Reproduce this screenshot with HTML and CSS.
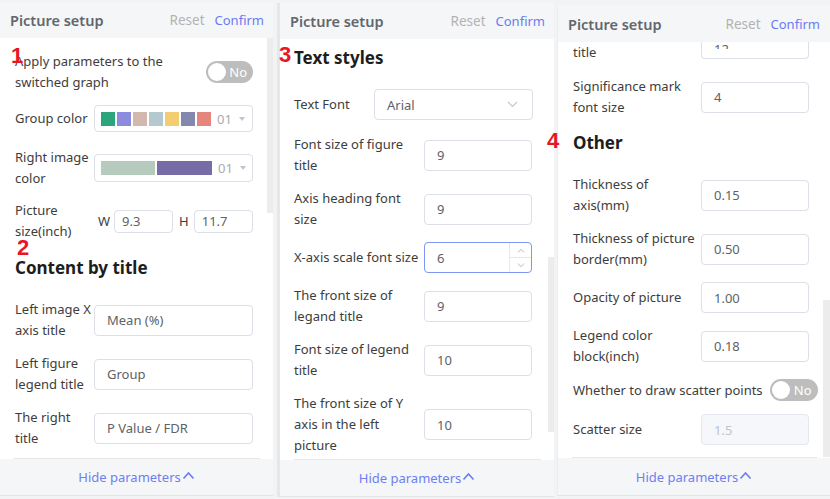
FILE: index.html
```html
<!DOCTYPE html>
<html>
<head>
<meta charset="utf-8">
<link rel="stylesheet" href="styles.css">
</head>
<body>
<div class="screen">
  <section class="panel p1">
    <header class="ph"><span class="ttl">Picture setup</span><span class="acts"><span class="reset">Reset</span><span class="confirm">Confirm</span></span></header>
    <div class="pbody">
      <div class="scroll">
        <div class="content c1">
          <div class="row r2">
            <div class="lab grow">Apply parameters to the switched graph</div>
            <div class="toggle"><span class="knob"></span><span class="tt">No</span></div>
          </div>
          <div class="row g12">
            <div class="lab w79">Group color</div>
            <div class="select sw">
              <div class="swatches">
                <i style="background:#2aa57c"></i><i style="background:#8b8be0"></i><i style="background:#d3b9ad"></i><i style="background:#b4c9cf"></i><i style="background:#f2cd71"></i><i style="background:#8488ae"></i><i style="background:#e5857b"></i>
              </div>
              <span class="num">01</span><span class="tri"></span>
            </div>
          </div>
          <div class="row r2 g15">
            <div class="lab w79">Right image color</div>
            <div class="select sw tall">
              <div class="bars"><i style="background:#b6cabd"></i><i style="background:#776ca5"></i></div>
              <span class="num">01</span><span class="tri"></span>
            </div>
          </div>
          <div class="row r2 g11">
            <div class="lab w79">Picture size(inch)</div>
            <div class="wh">
              <span class="whl">W</span><div class="inp small">9.3</div>
              <span class="whl hl">H</span><div class="inp small">11.7</div>
            </div>
          </div>
          <h2 class="head h-c">Content by title</h2>
          <div class="row r2">
            <div class="lab w79">Left image X axis title</div>
            <div class="inp wide">Mean (%)</div>
          </div>
          <div class="row r2 g12">
            <div class="lab w79">Left figure legend title</div>
            <div class="inp wide">Group</div>
          </div>
          <div class="row r2 g12">
            <div class="lab w79">The right title</div>
            <div class="inp wide">P Value / FDR</div>
          </div>
        </div>
      </div>
      <div class="sbar"><div class="thumb t1"></div></div>
    </div>
    <div class="sep"></div>
    <footer class="pf">Hide parameters<svg width="13" height="9" viewBox="0 0 13 9"><path d="M1.5 7.5 L6.5 2 L11.5 7.5" fill="none" stroke="#6d7ff0" stroke-width="1.7"/></svg></footer>
  </section>

  <section class="panel p2">
    <header class="ph"><span class="ttl">Picture setup</span><span class="acts"><span class="reset">Reset</span><span class="confirm">Confirm</span></span></header>
    <div class="pbody">
      <div class="scroll">
        <div class="content c2">
          <h2 class="head h-t">Text styles</h2>
          <div class="row">
            <div class="lab w80">Text Font</div>
            <div class="select font">Arial<svg class="chev" width="11" height="7" viewBox="0 0 11 7"><path d="M1 1 L5.5 5.5 L10 1" fill="none" stroke="#c3c6cc" stroke-width="1.1"/></svg></div>
          </div>
          <div class="row r2 g14">
            <div class="lab w130">Font size of figure title</div>
            <div class="inp narrow">9</div>
          </div>
          <div class="row r2 g12">
            <div class="lab w130">Axis heading font size</div>
            <div class="inp narrow">9</div>
          </div>
          <div class="row g12">
            <div class="lab w130 nowrap">X-axis scale font size</div>
            <div class="inp narrow focus">6<div class="spin"><span class="su"><svg width="8" height="5" viewBox="0 0 8 5"><path d="M1 4.5 L4 1.2 L7 4.5" fill="none" stroke="#b8bcc4" stroke-width="1"/></svg></span><span class="sd"><svg width="8" height="5" viewBox="0 0 8 5"><path d="M1 0.5 L4 3.8 L7 0.5" fill="none" stroke="#b8bcc4" stroke-width="1"/></svg></span></div></div>
          </div>
          <div class="row r2 g12">
            <div class="lab w130">The front size of legand title</div>
            <div class="inp narrow">9</div>
          </div>
          <div class="row r2 g12">
            <div class="lab w130">Font size of legend title</div>
            <div class="inp narrow">10</div>
          </div>
          <div class="row g12">
            <div class="lab w130">The front size of Y axis in the left picture</div>
            <div class="inp narrow">10</div>
          </div>
        </div>
      </div>
      <div class="sbar"><div class="thumb t2"></div></div>
    </div>
    <div class="sep"></div>
    <footer class="pf">Hide parameters<svg width="13" height="9" viewBox="0 0 13 9"><path d="M1.5 7.5 L6.5 2 L11.5 7.5" fill="none" stroke="#6d7ff0" stroke-width="1.7"/></svg></footer>
  </section>

  <section class="panel p3">
    <header class="ph"><span class="ttl">Picture setup</span><span class="acts"><span class="reset">Reset</span><span class="confirm">Confirm</span></span></header>
    <div class="pbody">
      <div class="scroll">
        <div class="content c3">
          <div class="row first">
            <div class="lab w128 lastline">title</div>
            <div class="inp narrow cut"><span class="cutv">12</span></div>
          </div>
          <div class="row r2 g13">
            <div class="lab w128">Significance mark font size</div>
            <div class="inp narrow">4</div>
          </div>
          <h2 class="head h-o">Other</h2>
          <div class="row r2">
            <div class="lab w128">Thickness of axis(mm)</div>
            <div class="inp narrow">0.15</div>
          </div>
          <div class="row r2 g12">
            <div class="lab w128">Thickness of picture border(mm)</div>
            <div class="inp narrow">0.50</div>
          </div>
          <div class="row g12">
            <div class="lab w128">Opacity of picture</div>
            <div class="inp narrow">1.00</div>
          </div>
          <div class="row r2 g12">
            <div class="lab w128">Legend color block(inch)</div>
            <div class="inp narrow">0.18</div>
          </div>
          <div class="row g12">
            <div class="lab nowrap">Whether to draw scatter points</div>
            <div class="toggle t-s"><span class="knob"></span><span class="tt">No</span></div>
          </div>
          <div class="row g13">
            <div class="lab w128">Scatter size</div>
            <div class="inp narrow dis">1.5</div>
          </div>
        </div>
      </div>
      <div class="sbar"><div class="thumb t3"></div></div>
    </div>
    <div class="sep"></div>
    <footer class="pf">Hide parameters<svg width="13" height="9" viewBox="0 0 13 9"><path d="M1.5 7.5 L6.5 2 L11.5 7.5" fill="none" stroke="#6d7ff0" stroke-width="1.7"/></svg></footer>
  </section>

  <span class="mark m1">1</span>
  <span class="mark m2">2</span>
  <span class="mark m3">3</span>
  <span class="mark m4">4</span>
</div>
</body>
</html>
```

FILE: styles.css
```css
* { box-sizing: border-box; }
html, body { margin: 0; padding: 0; }
body {
  width: 830px;
  height: 499px;
  overflow: hidden;
  background: #f2f3f5;
  font-family: "Noto Sans", "Open Sans", sans-serif;
  font-size: 13px;
  color: #3a3a3a;
}
.screen {
  position: relative;
  display: flex;
  align-items: flex-start;
  width: 830px;
  height: 499px;
}
.panel {
  display: flex;
  flex-direction: column;
  background: #fff;
  border-bottom: 1px solid #e3e4e6;
}
.p1 { width: 273px; margin-top: 2px; }
.p2 { width: 277px; margin-left: 4px; margin-top: 3px; border-left: 3px solid #e6e7e9; }
.p3 { width: 273px; margin-left: 3px; margin-top: 5px; border-left: 1px solid #eceef0; }

.ph {
  height: 36px;
  flex: none;
  display: flex;
  align-items: center;
  justify-content: space-between;
  padding: 0 9px 0 10px;
  background: #f5f6f8;
  position: relative;
  z-index: 1;
}
.p3 .ph { height: 37px; padding-left: 10px; padding-right: 10px; }
.ttl {
  font-size: 14.5px;
  font-weight: 600;
  color: #62666d;
}
.acts { display: flex; gap: 10px; font-size: 13px; }
.reset { color: #b2b2b2; font-size: 13.5px; }
.confirm { color: #6b7cf0; }

.pbody {
  display: flex;
  height: 420px;
  flex: none;
}
.p3 .pbody { height: 415px; }
.scroll { flex: 1; overflow: hidden; }
.content { display: flex; flex-direction: column; }
.c1 { padding: 13px 14px 0 15px; }
.c2 { padding: 7px 16px 0 14px; }
.c3 { padding: 0 15px 0 15px; }

.sbar { width: 6px; flex: none; display: flex; flex-direction: column; }
.p3 .sbar { width: 7px; }
.thumb { background: #ececec; }
.t1 { height: 175px; }
.t2 { height: 175px; margin-top: 218px; }
.t3 { height: 158px; margin-top: 258px; }

.sep { height: 1px; flex: none; background: #e6e7e9; margin: 0 13px 0 14px; }
.pf {
  height: 36px;
  flex: none;
  display: flex;
  align-items: center;
  justify-content: center;
  background: #f5f6f8;
  color: #6d7ff0;
  font-size: 13px;
}
.p3 .pf { height: 37px; }
.pf svg { margin-left: 1px; margin-top: -3px; }

.row { display: flex; align-items: center; }
.r2 { min-height: 42px; }
.g11 { margin-top: 11px; }
.g12 { margin-top: 12px; }
.g13 { margin-top: 13px; }
.g14 { margin-top: 14px; }
.g15 { margin-top: 15px; }

.first { height: 21px; align-items: flex-start; }
.lastline { line-height: 21px; }
.inp.cut { height: 17px; align-items: flex-end; overflow: hidden; border-top: none; border-radius: 0 0 4px 4px; }
.cutv { line-height: 12px; height: 6px; overflow: hidden; display: block; margin-bottom: 8px; transform: translateY(-1px); }

.lab { line-height: 21px; color: #3d3d3d; flex: none; }
.grow { flex: 1; padding-right: 20px; }
.w79 { width: 79px; }
.w80 { width: 80px; }
.w130 { width: 130px; }
.w128 { width: 128px; }
.nowrap { white-space: nowrap; }

.head {
  margin: 0;
  font-size: 17px;
  font-weight: 700;
  line-height: 24px;
  color: #1d1d1d;
}
.h-c { margin-top: 14px; margin-bottom: 19px; }
.h-t { margin-bottom: 19px; }
.h-o { margin-top: 13px; margin-bottom: 19px; }

.inp {
  height: 31px;
  flex: none;
  border: 1px solid #dcdfe6;
  border-radius: 4px;
  padding-left: 12px;
  display: flex;
  align-items: center;
  color: #606266;
  position: relative;
  background: #fff;
}
.wide { width: 159px; }
.narrow { width: 108px; }
.inp.small { width: 59px; height: 23px; padding-left: 7px; }
.inp.focus { border-color: #7d97f2; }
.inp.dis { background: #f5f7fa; border-color: #e4e7ed; color: #c0c4cc; }

.spin {
  position: absolute;
  right: 0;
  top: 0;
  bottom: 0;
  width: 22px;
  border-left: 1px solid #e4e7ed;
  display: flex;
  flex-direction: column;
}
.spin span { flex: 1; display: flex; align-items: center; justify-content: center; }
.spin .sd { border-top: 1px solid #e4e7ed; }

.wh { display: flex; align-items: center; }
.whl { margin-left: 4px; margin-right: 4px; color: #3d3d3d; }
.whl.hl { margin-left: 6px; margin-right: 5px; }

.select {
  border: 1px solid #dcdfe6;
  border-radius: 4px;
  display: flex;
  align-items: center;
  background: #fff;
  flex: none;
}
.sw { width: 159px; height: 27px; padding-left: 6px; }
.sw.tall { height: 28px; }
.swatches { display: flex; gap: 2px; }
.swatches i { display: block; width: 14px; height: 14px; }
.bars { display: flex; gap: 2px; }
.bars i { display: block; width: 54px; height: 14px; }
.bars i + i { width: 55px; }
.num { color: #a8abb2; margin-left: 6px; }
.tri {
  margin-left: 7px;
  width: 0;
  height: 0;
  border-left: 3px solid transparent;
  border-right: 3px solid transparent;
  border-top: 4px solid #c0c4cc;
}
.font {
  width: 159px;
  height: 31px;
  padding-left: 12px;
  color: #606266;
  justify-content: space-between;
  padding-right: 14px;
}

.toggle {
  width: 47px;
  height: 22px;
  border-radius: 11px;
  background: #bdbdbd;
  display: flex;
  align-items: center;
  padding: 0 6px 0 2px;
  justify-content: space-between;
  flex: none;
}
.t-s { width: 48px; margin-left: 7px; }
.knob { width: 18px; height: 18px; border-radius: 50%; background: #fff; }
.tt { color: #fff; font-size: 13px; }

.mark {
  position: absolute;
  font-family: "Liberation Sans", Arial, sans-serif;
  font-weight: 700;
  font-size: 22px;
  line-height: 22px;
  color: #e8161f;
  z-index: 2;
}
.m1 { left: 11px; top: 45px; }
.m2 { left: 17px; top: 237px; }
.m3 { left: 279px; top: 44px; }
.m4 { left: 547px; top: 130px; }
```
